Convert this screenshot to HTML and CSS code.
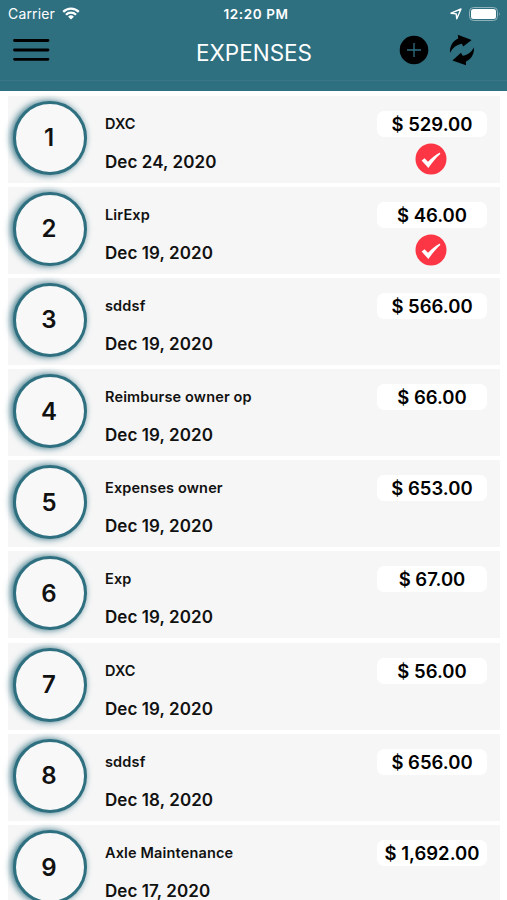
FILE: index.html
```html
<!DOCTYPE html>
<html lang="en">
<head>
  <meta charset="UTF-8">
  <meta name="viewport" content="width=device-width, initial-scale=1.0">
  <title>Expenses</title>
  <link rel="stylesheet" href="styles.css">
</head>
<body>
  <!-- Header -->
  <header>
    <div class="status-bar">
      <div class="carrier">
        <span>Carrier</span>
        <svg class="wifi" viewBox="0 0 18 13" width="18" height="13">
          <path d="M1.2 4.9a11 11 0 0 1 15.6 0M4 7.8a7 7 0 0 1 10 0" fill="none" stroke="#fff" stroke-width="2.3"/>
          <path d="M6.1 9.8a4.1 4.1 0 0 1 5.8 0L9 12.6z" fill="#fff"/>
        </svg>
      </div>
      <div class="time">12:20 PM</div>
      <div class="battery-area">
        <svg viewBox="0 0 12 12" width="12" height="12">
          <path d="M1 5.2L11 1L6.8 10.8L6.2 5.9z" fill="none" stroke="#fff" stroke-width="1.4" stroke-linejoin="round"/>
        </svg>
        <svg viewBox="0 0 32 14" width="32" height="14">
          <rect x=".5" y=".5" width="28" height="13" rx="4" fill="none" stroke="#8fb1bb"/>
          <rect x="2" y="2" width="25" height="10" rx="2.5" fill="#fff"/>
          <path d="M30 5q1.6 2 0 4z" fill="#8fb1bb"/>
        </svg>
      </div>
    </div>
    <nav class="nav-bar">
      <a href="#" class="menu" aria-label="Menu">
        <svg viewBox="0 0 38 24" width="38" height="24">
          <path d="M2.5 2.5h33.5M2.5 12h33.5M2.5 21.3h33.5" stroke="#000" stroke-width="2.8" stroke-linecap="round"/>
        </svg>
      </a>
      <h1>EXPENSES</h1>
      <div class="actions">
        <a href="#" aria-label="Add">
          <svg viewBox="0 0 30 30" width="30" height="30">
            <circle cx="15" cy="15" r="14.3"/>
            <path d="M8 15h14M15 8v14" stroke="#2e6f80" stroke-width="1.3"/>
          </svg>
        </a>
        <a href="#" aria-label="Refresh">
          <svg viewBox="0 0 26 32" width="26" height="32">
            <path d="M1 19C.6 12 3.8 7 9.2 4.6L8.8 .8L22.6 6L14.2 12.4L12.8 9.8C7.5 10.8 3.5 14 1 19z"/>
            <path d="M25 13.2C25.4 20 22.4 25 17 27.4L17 31.3L3.4 26.4L12 18.8L13.6 21.8C18.8 20.8 22.6 18.2 25 13.2z"/>
          </svg>
        </a>
      </div>
    </nav>
  </header>

  <!-- Expense List -->
  <ul class="expenses" id="expenses"></ul>

  <script src="script.js"></script>
</body>
</html>
```
FILE: styles.css
```css
/* Reset and Global Styles */
* {
  margin: 0;
  padding: 0;
  box-sizing: border-box;
}
body {
  height: 900px;
  overflow: hidden;
  font-family: Inter, "Liberation Sans", sans-serif;
  color: #111;
  background-color: #fff;
}
svg {
  display: block;
}

/* Header */
header {
  height: 91px;
  background-color: #2e6f80;
  color: #fff;
}
.status-bar {
  display: grid;
  grid-template-columns: 1fr auto 1fr;
  align-items: center;
  height: 27px;
  padding: 0 6px 0 8px;
  font-size: 14px;
}
.carrier {
  display: flex;
  align-items: center;
  gap: 7px;
  letter-spacing: 0.15px;
}
.time {
  padding-left: 3px;
  font-size: 13.5px;
  font-weight: 600;
  letter-spacing: 0.6px;
}
.battery-area {
  display: flex;
  align-items: center;
  justify-content: flex-end;
  gap: 7px;
}
.nav-bar {
  display: grid;
  grid-template-columns: 1fr auto 1fr;
  align-items: center;
  height: 54px;
  padding: 0 32px 7px 12px;
  border-bottom: 1px solid #3a7888;
}
.nav-bar h1 {
  padding: 5px 0 0 21px;
  font-size: 22.5px;
  font-weight: 400;
}
.actions {
  display: flex;
  align-items: center;
  justify-content: flex-end;
  gap: 20px;
}

/* Expense List */
.expenses {
  display: flex;
  flex-direction: column;
  gap: 4.2px;
  padding: 4.5px 7px 0 8px;
  list-style: none;
}
.expense {
  display: flex;
  flex: none;
  height: 87px;
  padding-left: 5px;
  background-color: #f6f6f6;
}
.number {
  display: flex;
  align-items: center;
  justify-content: center;
  width: 74px;
  height: 74px;
  margin-top: 5px;
  padding-right: 2px;
  border: 3px solid #2e6f80;
  border-radius: 50%;
  background-color: #f8f8f8;
  box-shadow: -2px 0 7px #2e6f80;
  font-size: 24px;
  font-weight: 600;
}
.details {
  flex: 1;
  padding: 18px 0 0 18px;
  font-weight: 600;
}
.name {
  height: 19px;
  font-size: 14.5px;
  line-height: 19px;
  letter-spacing: 0.15px;
}
.date {
  margin-top: 18px;
  font-size: 17px;
  line-height: 22px;
  letter-spacing: 0.08px;
}
.total {
  display: flex;
  flex-direction: column;
  align-items: center;
  width: 110px;
  margin: 15px 13px 0 0;
}
.amount {
  width: 110px;
  height: 26px;
  border-radius: 7px;
  background-color: #fff;
  color: #000;
  font-size: 18.5px;
  font-weight: 600;
  line-height: 27px;
  text-align: center;
}
.check {
  margin: 6px 3px 0 0;
}
```
FILE: script.js
```js
const expenses = [
  { name: 'DXC', date: 'Dec 24, 2020', amount: '529.00', checked: true },
  { name: 'LirExp', date: 'Dec 19, 2020', amount: '46.00', checked: true },
  { name: 'sddsf', date: 'Dec 19, 2020', amount: '566.00' },
  { name: 'Reimburse owner op', date: 'Dec 19, 2020', amount: '66.00' },
  { name: 'Expenses owner', date: 'Dec 19, 2020', amount: '653.00' },
  { name: 'Exp', date: 'Dec 19, 2020', amount: '67.00' },
  { name: 'DXC', date: 'Dec 19, 2020', amount: '56.00' },
  { name: 'sddsf', date: 'Dec 18, 2020', amount: '656.00' },
  { name: 'Axle Maintenance', date: 'Dec 17, 2020', amount: '1,692.00' }
];

const checkIcon = `
  <svg class="check" viewBox="0 0 32 32" width="32" height="32">
    <circle cx="16" cy="16" r="15.5" fill="#fc3644"/>
    <path d="M6.6 17.6L9.6 15.2L13 18.8C16.8 14.8 20.6 11.8 25 9.6L25.3 11C20.8 15 17.2 19.6 13.4 25z" fill="#fff"/>
  </svg>`;

// Build the list
document.getElementById('expenses').innerHTML = expenses.map((expense, index) => `
  <li class="expense">
    <div class="number">${index + 1}</div>
    <div class="details">
      <div class="name">${expense.name}</div>
      <div class="date">${expense.date}</div>
    </div>
    <div class="total">
      <div class="amount">$ ${expense.amount}</div>
      ${expense.checked ? checkIcon : ''}
    </div>
  </li>`).join('');
```
